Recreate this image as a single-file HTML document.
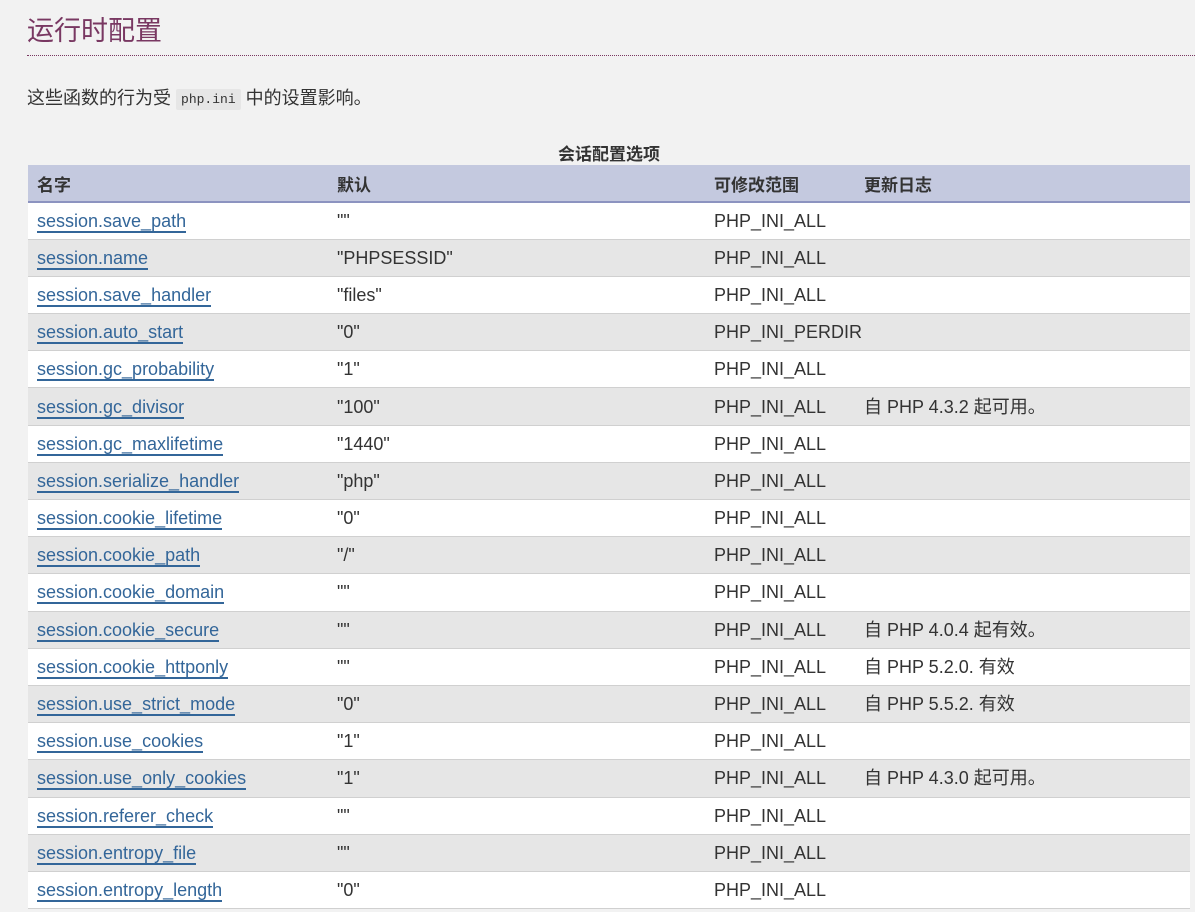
<!DOCTYPE html>
<html><head><meta charset="utf-8"><style>
body{margin:0;background:#f2f2f2;font-family:"Liberation Sans","Noto Sans CJK SC",sans-serif;color:#333;width:1195px;height:912px;overflow:hidden}
h1{position:absolute;left:27px;top:11px;margin:0;font-weight:normal;font-size:27px;color:#793862;font-family:"Noto Sans CJK SC",sans-serif;line-height:36px}
.hr{position:absolute;left:27px;right:0;top:55px;border-top:1px dotted #793862}
p{position:absolute;left:27px;top:86px;margin:0;font-size:18px;line-height:24px;font-family:"Liberation Sans","Noto Sans CJK SC",sans-serif}
code{background:#e6e6e6;font-family:"Liberation Mono",monospace;font-size:13px;padding:3px 5px;border-radius:2px;vertical-align:1px}
.cap{position:absolute;left:28px;width:1162px;top:140px;text-align:center;font-weight:bold;font-size:17px;font-family:"Noto Sans CJK SC",sans-serif}
table{position:absolute;left:28px;top:165px;width:1162px;border-collapse:collapse;font-size:18px;table-layout:fixed}
th{background:#c4c9df;text-align:left;height:37px;padding:0 9px;border-bottom:2px solid #8c93c0;font-family:"Noto Sans CJK SC",sans-serif;font-size:17px;font-weight:bold;box-sizing:border-box}
td{height:37.2px;padding:0 9px;border-bottom:1px solid #d0d0d0;box-sizing:border-box;white-space:nowrap;line-height:20px;vertical-align:middle}
td span{display:inline-block;line-height:20px;vertical-align:top}
tr:nth-child(odd) td{background:#fff}
tr:nth-child(even) td{background:#e6e6e6}
a{color:#369;text-decoration:none;border-bottom:2px solid #369}
</style></head><body>
<h1>运行时配置</h1><div class="hr"></div>
<p>这些函数的行为受 <code>php.ini</code> 中的设置影响。</p>
<div class="cap">会话配置选项</div>
<table>
<colgroup><col style="width:300px"><col style="width:377px"><col style="width:150px"><col></colgroup>
<thead><tr><th>名字</th><th>默认</th><th>可修改范围</th><th>更新日志</th></tr></thead>
<tbody>
<tr><td><a>session.save_path</a></td><td>""</td><td>PHP_INI_ALL</td><td></td></tr>
<tr><td><a>session.name</a></td><td>"PHPSESSID"</td><td>PHP_INI_ALL</td><td></td></tr>
<tr><td><a>session.save_handler</a></td><td>"files"</td><td>PHP_INI_ALL</td><td></td></tr>
<tr><td><a>session.auto_start</a></td><td>"0"</td><td>PHP_INI_PERDIR</td><td></td></tr>
<tr><td><a>session.gc_probability</a></td><td>"1"</td><td>PHP_INI_ALL</td><td></td></tr>
<tr><td><a>session.gc_divisor</a></td><td>"100"</td><td>PHP_INI_ALL</td><td><span>自 PHP 4.3.2 起可用。</span></td></tr>
<tr><td><a>session.gc_maxlifetime</a></td><td>"1440"</td><td>PHP_INI_ALL</td><td></td></tr>
<tr><td><a>session.serialize_handler</a></td><td>"php"</td><td>PHP_INI_ALL</td><td></td></tr>
<tr><td><a>session.cookie_lifetime</a></td><td>"0"</td><td>PHP_INI_ALL</td><td></td></tr>
<tr><td><a>session.cookie_path</a></td><td>"/"</td><td>PHP_INI_ALL</td><td></td></tr>
<tr><td><a>session.cookie_domain</a></td><td>""</td><td>PHP_INI_ALL</td><td></td></tr>
<tr><td><a>session.cookie_secure</a></td><td>""</td><td>PHP_INI_ALL</td><td><span>自 PHP 4.0.4 起有效。</span></td></tr>
<tr><td><a>session.cookie_httponly</a></td><td>""</td><td>PHP_INI_ALL</td><td><span>自 PHP 5.2.0. 有效</span></td></tr>
<tr><td><a>session.use_strict_mode</a></td><td>"0"</td><td>PHP_INI_ALL</td><td><span>自 PHP 5.5.2. 有效</span></td></tr>
<tr><td><a>session.use_cookies</a></td><td>"1"</td><td>PHP_INI_ALL</td><td></td></tr>
<tr><td><a>session.use_only_cookies</a></td><td>"1"</td><td>PHP_INI_ALL</td><td><span>自 PHP 4.3.0 起可用。</span></td></tr>
<tr><td><a>session.referer_check</a></td><td>""</td><td>PHP_INI_ALL</td><td></td></tr>
<tr><td><a>session.entropy_file</a></td><td>""</td><td>PHP_INI_ALL</td><td></td></tr>
<tr><td><a>session.entropy_length</a></td><td>"0"</td><td>PHP_INI_ALL</td><td></td></tr>
</tbody></table>
</body></html>
